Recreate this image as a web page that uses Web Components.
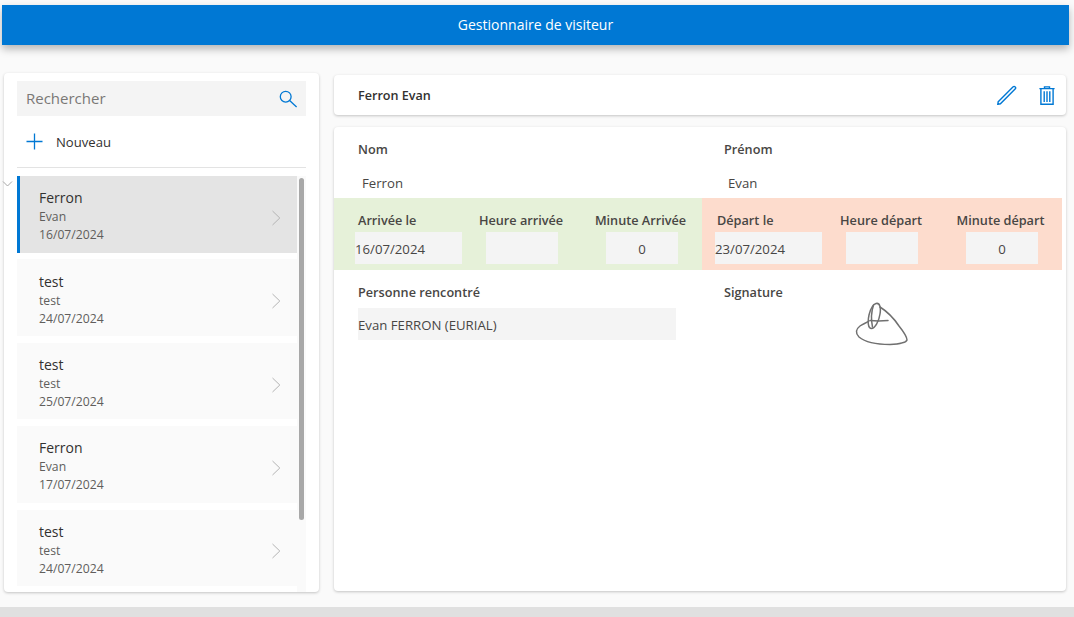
<!DOCTYPE html>
<html lang="fr">
<head>
<meta charset="utf-8">
<title>Gestionnaire de visiteur</title>
<style>
    html, body { margin: 0; padding: 0; background: #fafafa; }
    body { font-family: "Open Sans", "Liberation Sans", sans-serif; color: #323130; overflow: hidden; }
</style>
</head>
<body>
<visitor-app></visitor-app>
<script>
class AppHeader extends HTMLElement {
    constructor() {
        super();
        const shadowRoot = this.attachShadow({ mode: 'open' });
        shadowRoot.innerHTML = `
            <style>
                :host {
                    display: flex;
                    justify-content: center;
                    align-items: center;
                    box-sizing: border-box;
                    height: 40px;
                    padding-bottom: 2px;
                    margin: 5px 5px 0 2px;
                    background: #0078d4;
                    color: #fff;
                    font-size: 14px;
                    box-shadow: 0 4px 8px rgba(0,0,0,.28);
                }
            </style>
            <slot></slot>
        `;
    }
}

class SearchBox extends HTMLElement {
    constructor() {
        super();
        const shadowRoot = this.attachShadow({ mode: 'open' });
        shadowRoot.innerHTML = `
            <style>
                :host {
                    display: flex;
                    justify-content: space-between;
                    align-items: center;
                    height: 35px;
                    margin: 8px 13px 0;
                    padding: 0 8px 0 9px;
                    background: #f4f4f4;
                    color: #7a7876;
                    font-size: 15px;
                }
                span { margin-top: -2px; }
                svg { width: 20px; height: 20px; }
            </style>
            <span><slot></slot></span>
            <svg viewBox="0 0 20 20" fill="none" stroke="#0078d4" stroke-width="1.3">
                <circle cx="7.7" cy="7.7" r="5.4"/>
                <path d="M11.6 11.6 L18.6 18"/>
            </svg>
        `;
    }
}

class NewButton extends HTMLElement {
    constructor() {
        super();
        const shadowRoot = this.attachShadow({ mode: 'open' });
        shadowRoot.innerHTML = `
            <style>
                :host {
                    display: flex;
                    align-items: center;
                    gap: 13px;
                    height: 51px;
                    margin: 0 13px;
                    padding-left: 9px;
                    border-bottom: 1px solid #e3e3e3;
                    font-size: 13.1px;
                }
                svg { width: 17px; height: 17px; }
            </style>
            <svg viewBox="0 0 17 17" stroke="#0078d4" stroke-width="1.3">
                <path d="M8.5 0.5 V16.5 M0.5 8.5 H16.5"/>
            </svg>
            <slot></slot>
        `;
    }
}

class VisitorItem extends HTMLElement {
    constructor() {
        super();
        const shadowRoot = this.attachShadow({ mode: 'open' });
        shadowRoot.innerHTML = `
            <style>
                :host {
                    display: flex;
                    align-items: center;
                    justify-content: space-between;
                    box-sizing: border-box;
                    height: 76.6px;
                    flex: none;
                    padding: 0 16px 0 22px;
                    background: #fafafa;
                }
                :host([selected]) {
                    background: #e4e4e4;
                    border-left: 3px solid #0078d4;
                    padding-left: 19px;
                }
                .text { margin-top: 5px; }
                .title { font-size: 14px; line-height: 17px; margin-bottom: 2px; color: #323130; }
                .sub { font-size: 12.2px; line-height: 18px; color: #605e5c; }
                svg { width: 10px; height: 16px; margin-top: 7px; }
            </style>
            <div class="text">
                <div class="title"></div>
                <div class="sub"></div>
                <div class="sub"></div>
            </div>
            <svg viewBox="0 0 10 16" fill="none" stroke="#b4b4b4" stroke-width="1">
                <path d="M1.5 1 L8.8 8 L1.5 15"/>
            </svg>
        `;
    }

    connectedCallback() {
        const lines = this.shadowRoot.querySelectorAll('.title, .sub');
        lines[0].textContent = this.getAttribute('name');
        lines[1].textContent = this.getAttribute('first');
        lines[2].textContent = this.getAttribute('date');
    }
}

class VisitorList extends HTMLElement {
    constructor() {
        super();
        const shadowRoot = this.attachShadow({ mode: 'open' });
        shadowRoot.innerHTML = `
            <style>
                :host {
                    display: block;
                    position: relative;
                    flex: 1;
                    min-height: 0;
                    margin: 8px 13px 0;
                    overflow: hidden;
                }
                .rows {
                    display: flex;
                    flex-direction: column;
                    gap: 6.8px;
                    width: 280px;
                }
                .track {
                    position: absolute;
                    top: 0;
                    bottom: 0;
                    right: 0;
                    width: 9px;
                    background: #fafafa;
                }
                .thumb {
                    position: absolute;
                    top: 2px;
                    left: 2px;
                    width: 5px;
                    height: 342px;
                    border-radius: 3px;
                    background: #a8a8a8;
                }
            </style>
            <div class="rows"><slot></slot></div>
            <div class="track"><div class="thumb"></div></div>
        `;
    }
}

class SidePanel extends HTMLElement {
    constructor() {
        super();
        const shadowRoot = this.attachShadow({ mode: 'open' });
        shadowRoot.innerHTML = `
            <style>
                :host {
                    display: flex;
                    flex-direction: column;
                    position: relative;
                    box-sizing: border-box;
                    width: 315px;
                    height: 519px;
                    background: #fff;
                    border-radius: 4px;
                    box-shadow: 0 1px 3px rgba(0,0,0,.22);
                }
                .collapse {
                    position: absolute;
                    left: -2px;
                    top: 108px;
                    width: 11px;
                    height: 6px;
                }
            </style>
            <slot></slot>
            <svg class="collapse" viewBox="0 0 11 6" fill="none" stroke="#a6a6a6">
                <path d="M1 0.5 L5.5 5 L10 0.5"/>
            </svg>
        `;
    }
}

class DetailHeader extends HTMLElement {
    constructor() {
        super();
        const shadowRoot = this.attachShadow({ mode: 'open' });
        shadowRoot.innerHTML = `
            <style>
                :host {
                    display: flex;
                    align-items: center;
                    justify-content: space-between;
                    height: 40px;
                    padding: 0 11px 0 24px;
                    background: #fff;
                    border-radius: 4px;
                    box-shadow: 0 1px 3px rgba(0,0,0,.22);
                    font-size: 12.6px;
                    font-weight: 600;
                }
                .actions { display: flex; align-items: center; gap: 22px; }
                svg { display: block; }
            </style>
            <slot></slot>
            <div class="actions">
                <svg width="20" height="20" viewBox="0 0 20 20" fill="none" stroke="#0078d4" stroke-width="1.4">
                    <path d="M1.2 16.7 L15.9 2 C16.6 1.3 17.6 1.3 18.2 1.9 C18.8 2.5 18.8 3.4 18.1 4.1 L3.4 18.8 L0.8 19.3 Z"/>
                </svg>
                <svg width="16" height="19" viewBox="0 0 16 19" fill="none" stroke="#0078d4" stroke-width="1.4">
                    <path d="M0.4 2.6 H15.6 M5.5 2.4 V0.9 H10.5 V2.4"/>
                    <path d="M1.9 2.6 V18.3 H14.1 V2.6"/>
                    <path d="M5.2 5.2 V16 M8 5.2 V16 M10.8 5.2 V16"/>
                </svg>
            </div>
        `;
    }
}

class FieldLabel extends HTMLElement {
    constructor() {
        super();
        const shadowRoot = this.attachShadow({ mode: 'open' });
        shadowRoot.innerHTML = `
            <style>
                :host {
                    display: block;
                    font-size: 12.7px;
                    line-height: 17px;
                    margin-bottom: 1px;
                    font-weight: 600;
                    color: #484644;
                    white-space: nowrap;
                }
            </style>
            <slot></slot>
        `;
    }
}

class FieldInput extends HTMLElement {
    constructor() {
        super();
        const shadowRoot = this.attachShadow({ mode: 'open' });
        shadowRoot.innerHTML = `
            <style>
                :host {
                    display: flex;
                    align-items: center;
                    box-sizing: border-box;
                    height: 32px;
                    padding-top: 1px;
                    background: #f4f4f4;
                    font-size: 13.2px;
                    color: #484644;
                    white-space: nowrap;
                }
                :host([center]) { justify-content: center; }
                :host([plain]) { background: transparent; padding-left: 4px; padding-top: 0; }
            </style>
            <slot></slot>
        `;
    }
}

class TimeBand extends HTMLElement {
    constructor() {
        super();
        const shadowRoot = this.attachShadow({ mode: 'open' });
        shadowRoot.innerHTML = `
            <style>
                :host {
                    display: flex;
                    box-sizing: border-box;
                    height: 72px;
                    padding-top: 14px;
                    background: var(--band, #e6f1d9);
                }
            </style>
            <slot></slot>
        `;
    }
}

class TimeCell extends HTMLElement {
    constructor() {
        super();
        const shadowRoot = this.attachShadow({ mode: 'open' });
        shadowRoot.innerHTML = `
            <style>
                :host {
                    display: flex;
                    flex-direction: column;
                    align-items: center;
                    gap: 2px;
                    flex: none;
                }
                :host([date]) { align-items: stretch; }
                ::slotted(field-input) { align-self: stretch; }
            </style>
            <slot></slot>
        `;
    }
}

class SignaturePad extends HTMLElement {
    constructor() {
        super();
        const shadowRoot = this.attachShadow({ mode: 'open' });
        shadowRoot.innerHTML = `
            <style>
                :host { display: block; width: 75px; height: 55px; margin: -7px 0 0 121px; }
                svg { display: block; filter: blur(0.35px); }
            </style>
            <svg width="75" height="55" viewBox="0 0 75 55" fill="none" stroke="#707070" stroke-width="1.5" stroke-linecap="round" stroke-linejoin="round">
                <path d="M35 12 C43 17 50 25 54 31 C58 36 62 41 62 45 C61 48 55 49 45 49.5 C33 49.5 20 47 14 42 C10 38 11 34 15 31 C18 29 21 28 24 26"/>
                <path d="M31 8.5 C35 7.5 36 13 35 19 C34 26 30 33.5 26.5 33.5 C23 33.5 22.5 27 24 20 C25.5 14 27.5 9.5 31 8.5 Z"/>
                <path d="M28.5 10 C26.5 16 26 25 27.5 32"/>
                <path d="M25 25.5 C30 26 37 26 43 25.5"/>
            </svg>
        `;
    }
}

class DetailCard extends HTMLElement {
    constructor() {
        super();
        const shadowRoot = this.attachShadow({ mode: 'open' });
        shadowRoot.innerHTML = `
            <style>
                :host {
                    display: block;
                    flex: 1;
                    margin-top: 12px;
                    background: #fff;
                    border-radius: 4px;
                    box-shadow: 0 1px 3px rgba(0,0,0,.22);
                }
                .row { display: grid; grid-template-columns: 366px 1fr; padding-left: 24px; }
                .names { height: 71px; padding-top: 14px; box-sizing: border-box; }
                .names field-input { height: 32px; margin-top: 9px; }
                .bands { display: flex; width: 728px; }
                .bands time-band:first-child { width: 368px; --band: #e6f1d9; padding-left: 21px; }
                .bands time-band:last-child { width: 360px; --band: #fddccd; padding-left: 13px; }
                .bottom { padding-top: 14px; }
                .bottom field-input { width: 318px; margin-top: 7px; }
                .first { width: 107px; margin-right: 24px; }
                .second { width: 72px; margin-right: 48px; }
                .third { width: 72px; }
                .first field-label { padding-left: 3px; }
                .second field-label { padding-right: 2px; }
                .third field-label { padding-right: 3px; }
                .bands time-band:last-child .first field-label { padding-left: 2px; }
            </style>
            <div class="row names">
                <div><field-label>Nom</field-label><field-input plain>Ferron</field-input></div>
                <div><field-label>Prénom</field-label><field-input plain>Evan</field-input></div>
            </div>
            <div class="bands">
                <time-band>
                    <time-cell class="first" date><field-label>Arrivée le</field-label><field-input>16/07/2024</field-input></time-cell>
                    <time-cell class="second"><field-label>Heure arrivée</field-label><field-input></field-input></time-cell>
                    <time-cell class="third"><field-label>Minute Arrivée</field-label><field-input center>0</field-input></time-cell>
                </time-band>
                <time-band>
                    <time-cell class="first" date><field-label>Départ le</field-label><field-input>23/07/2024</field-input></time-cell>
                    <time-cell class="second"><field-label>Heure départ</field-label><field-input></field-input></time-cell>
                    <time-cell class="third"><field-label>Minute départ</field-label><field-input center>0</field-input></time-cell>
                </time-band>
            </div>
            <div class="row bottom">
                <div><field-label>Personne rencontré</field-label><field-input>Evan FERRON (EURIAL)</field-input></div>
                <div><field-label>Signature</field-label><signature-pad></signature-pad></div>
            </div>
        `;
    }
}

class VisitorApp extends HTMLElement {
    constructor() {
        super();
        const shadowRoot = this.attachShadow({ mode: 'open' });
        shadowRoot.innerHTML = `
            <style>
                :host {
                    display: flex;
                    flex-direction: column;
                    height: 617px;
                    overflow: hidden;
                }
                main {
                    display: flex;
                    gap: 15px;
                    flex: 1;
                    min-height: 0;
                    padding: 28px 8px 15px 4px;
                }
                .detail {
                    display: flex;
                    flex-direction: column;
                    flex: 1;
                    margin: 2px 0 1px;
                }
                .strip { height: 10px; flex: none; background: #e0e0e0; }
            </style>
            <app-header>Gestionnaire de visiteur</app-header>
            <main>
                <side-panel>
                    <search-box>Rechercher</search-box>
                    <new-button>Nouveau</new-button>
                    <visitor-list>
                        <visitor-item selected name="Ferron" first="Evan" date="16/07/2024"></visitor-item>
                        <visitor-item name="test" first="test" date="24/07/2024"></visitor-item>
                        <visitor-item name="test" first="test" date="25/07/2024"></visitor-item>
                        <visitor-item name="Ferron" first="Evan" date="17/07/2024"></visitor-item>
                        <visitor-item name="test" first="test" date="24/07/2024"></visitor-item>
                    </visitor-list>
                </side-panel>
                <div class="detail">
                    <detail-header>Ferron Evan</detail-header>
                    <detail-card></detail-card>
                </div>
            </main>
            <div class="strip"></div>
        `;
    }
}

customElements.define('app-header', AppHeader);
customElements.define('search-box', SearchBox);
customElements.define('new-button', NewButton);
customElements.define('visitor-item', VisitorItem);
customElements.define('visitor-list', VisitorList);
customElements.define('side-panel', SidePanel);
customElements.define('detail-header', DetailHeader);
customElements.define('field-label', FieldLabel);
customElements.define('field-input', FieldInput);
customElements.define('time-band', TimeBand);
customElements.define('time-cell', TimeCell);
customElements.define('signature-pad', SignaturePad);
customElements.define('detail-card', DetailCard);
customElements.define('visitor-app', VisitorApp);
</script>
</body>
</html>
